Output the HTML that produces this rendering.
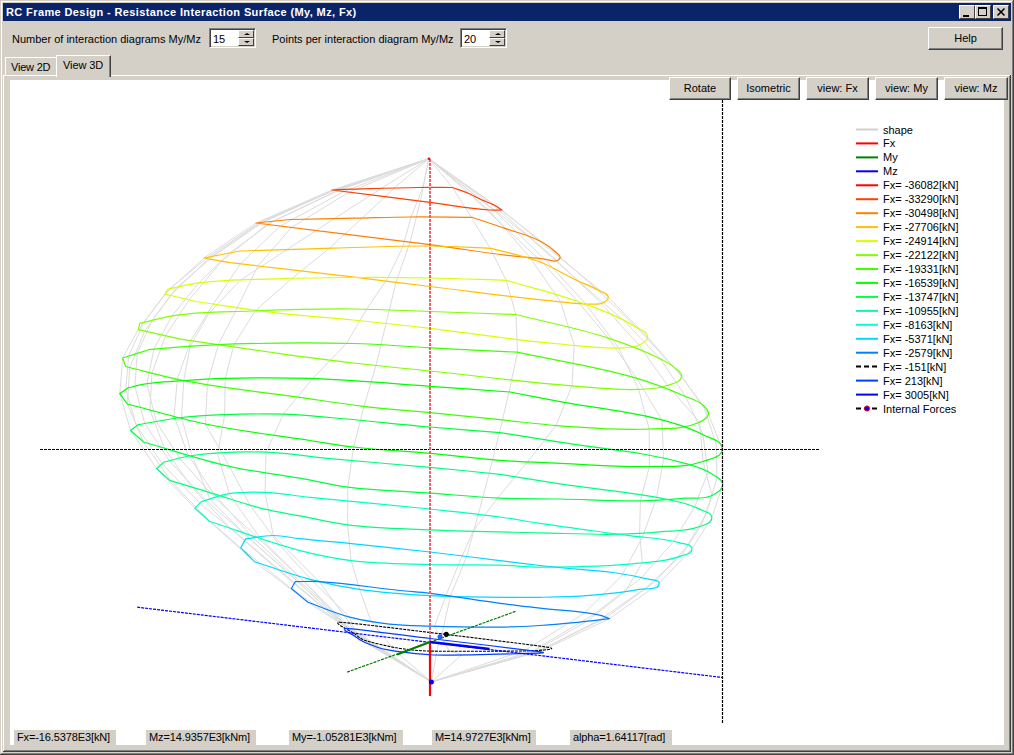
<!DOCTYPE html>
<html><head><meta charset="utf-8">
<style>
*{box-sizing:border-box}
html,body{margin:0;padding:0}
body{width:1014px;height:755px;overflow:hidden;position:relative;background:#d4d0c8;font-family:"Liberation Sans",sans-serif;font-size:11px;color:#000}
.a{position:absolute}
.t{position:absolute;white-space:nowrap;line-height:13px}
.btn{position:absolute;background:#d4d0c8;border-top:1px solid #fff;border-left:1px solid #fff;border-right:1px solid #404040;border-bottom:1px solid #404040;box-shadow:inset -1px -1px 0 #808080;text-align:center;white-space:nowrap}
.spin{position:absolute;background:#fff;border-top:1px solid #808080;border-left:1px solid #808080;border-right:1px solid #fff;border-bottom:1px solid #fff;box-shadow:inset 1px 1px 0 #404040, inset -1px -1px 0 #d4d0c8}
.sb{position:absolute;background:#d4d0c8;border-top:1px solid #fff;border-left:1px solid #fff;border-right:1px solid #404040;border-bottom:1px solid #404040}
.lbl{position:absolute;background:#d4d0c8;height:15px;white-space:nowrap;line-height:15px;padding-left:3px;letter-spacing:-0.12px}
svg text{font-family:"Liberation Sans",sans-serif;font-size:11px;fill:#000}
</style></head><body>
<!-- window frame -->
<div class="a" style="left:1px;top:1px;width:1012px;height:1px;background:#fff"></div>
<div class="a" style="left:1px;top:1px;width:1px;height:753px;background:#fff"></div>
<div class="a" style="left:1013px;top:0;width:1px;height:755px;background:#404040"></div>
<div class="a" style="left:1012px;top:1px;width:1px;height:753px;background:#808080"></div>
<div class="a" style="left:0;top:754px;width:1014px;height:1px;background:#404040"></div>
<div class="a" style="left:1px;top:753px;width:1012px;height:1px;background:#808080"></div>
<!-- title bar -->
<div class="a" style="left:3px;top:3px;width:1008px;height:18px;background:#0a246a"></div>
<div class="t" style="left:6px;top:6px;color:#fff;font-weight:bold;font-size:11px;letter-spacing:0.39px">RC Frame Design - Resistance Interaction Surface (My, Mz, Fx)</div>
<div class="sb" style="left:959px;top:5px;width:16px;height:14px"><div class="a" style="left:3px;top:9px;width:6px;height:2px;background:#000"></div></div>
<div class="sb" style="left:975px;top:5px;width:16px;height:14px"><div class="a" style="left:2px;top:1px;width:9px;height:9px;border:1px solid #000;border-top-width:2px"></div></div>
<div class="sb" style="left:993px;top:5px;width:16px;height:14px"><svg class="a" style="left:0;top:0" width="14" height="12"><path d="M3.5,2.5 L10.5,9.5 M10.5,2.5 L3.5,9.5" stroke="#000" stroke-width="1.6"/></svg></div>
<!-- toolbar -->
<div class="t" style="left:12px;top:33px">Number of interaction diagrams My/Mz</div>
<div class="spin" style="left:209px;top:28px;width:47px;height:20px"><div class="t" style="left:3px;top:4px">15</div></div>
<div class="sb" style="left:238px;top:30px;width:16px;height:8px"><div class="a" style="left:5px;top:2px;width:0;height:0;border-left:3px solid transparent;border-right:3px solid transparent;border-bottom:2px solid #000"></div></div>
<div class="sb" style="left:238px;top:38px;width:16px;height:8px"><div class="a" style="left:5px;top:2px;width:0;height:0;border-left:3px solid transparent;border-right:3px solid transparent;border-top:2px solid #000"></div></div>
<div class="t" style="left:272px;top:33px">Points per interaction diagram My/Mz</div>
<div class="spin" style="left:460px;top:28px;width:47px;height:20px"><div class="t" style="left:3px;top:4px">20</div></div>
<div class="sb" style="left:489px;top:30px;width:16px;height:8px"><div class="a" style="left:5px;top:2px;width:0;height:0;border-left:3px solid transparent;border-right:3px solid transparent;border-bottom:2px solid #000"></div></div>
<div class="sb" style="left:489px;top:38px;width:16px;height:8px"><div class="a" style="left:5px;top:2px;width:0;height:0;border-left:3px solid transparent;border-right:3px solid transparent;border-top:2px solid #000"></div></div>
<div class="btn" style="left:928px;top:27px;width:75px;height:23px;line-height:21px">Help</div>
<!-- tabs -->
<div class="a" style="left:5px;top:57px;width:51px;height:19px;border-top:1px solid #fff;border-left:1px solid #fff"></div>
<div class="t" style="left:11px;top:61px;letter-spacing:-0.2px">View 2D</div>
<div class="a" style="left:3px;top:75px;width:1008px;height:1px;background:#fff"></div>
<div class="a" style="left:56px;top:55px;width:55px;height:22px;background:#d4d0c8;border-top:1px solid #fff;border-left:1px solid #fff;border-right:1px solid #404040;box-shadow:inset -1px 0 0 #808080"></div>
<div class="t" style="left:63px;top:59px;letter-spacing:-0.1px">View 3D</div>
<!-- panel borders -->
<div class="a" style="left:3px;top:75px;width:1px;height:676px;background:#fff"></div>
<div class="a" style="left:1010px;top:75px;width:1px;height:677px;background:#404040"></div>
<div class="a" style="left:1009px;top:76px;width:1px;height:675px;background:#808080"></div>
<div class="a" style="left:3px;top:751px;width:1008px;height:1px;background:#404040"></div>
<div class="a" style="left:4px;top:750px;width:1006px;height:1px;background:#808080"></div>
<!-- chart area -->
<div class="a" style="left:10px;top:80px;width:994px;height:665px;background:#fff;overflow:hidden">
<svg class="a" style="left:-10px;top:-80px" width="1014" height="755" viewBox="0 0 1014 755">
<g fill="none" stroke-width="1.2" stroke-linejoin="round">
<path d="M428.9,158.7 L332.0,190.0 L256.0,223.0 L204.0,258.0 L165.0,294.0 L138.3,329.7 L122.7,358.0 L119.8,393.6 L130.6,430.5 L156.6,468.5 L195.0,508.2 L240.7,547.8 L291.4,588.5 L339.5,622.3 L346.6,628.4 L431.4,681.9" stroke="#dcdcdc" stroke-width="1"/>
<path d="M428.9,158.7 L502.0,210.0 L560.0,258.0 L608.3,297.0 L647.6,337.2 L681.6,376.5 L708.4,414.1 L722.3,449.0 L722.7,484.7 L711.8,517.9 L692.0,548.7 L659.2,583.4 L609.5,618.6 L548.7,647.4 L539.0,651.6 L431.4,681.9" stroke="#dcdcdc" stroke-width="1"/>
<path d="M428.9,158.7 L335.4,189.8 L262.6,222.3 L213.4,256.2 L177.1,287.2 L151.9,320.7 L137.3,353.4 L134.9,386.3 L144.8,423.6 L169.4,460.8 L205.9,500.4 L249.5,538.4 L297.8,581.6 L342.6,622.7 L348.5,628.6 L431.4,681.9" stroke="#dcdcdc" stroke-width="1"/>
<path d="M428.9,158.7 L333.7,189.9 L259.0,222.7 L208.0,257.2 L169.8,288.6 L143.7,322.5 L128.6,356.2 L125.8,389.3 L136.5,426.0 L162.2,463.8 L200.0,503.2 L244.9,540.4 L294.6,582.9 L341.1,622.5 L347.6,628.5 L431.4,681.9" stroke="#dcdcdc" stroke-width="1"/>
<path d="M428.9,158.7 L340.5,189.5 L273.2,221.2 L229.6,253.0 L198.8,283.0 L171.8,316.1 L153.9,349.0 L146.9,383.9 L156.3,421.7 L179.7,458.4 L214.9,497.8 L257.4,537.5 L304.1,581.6 L342.6,622.7 L348.5,628.6 L431.4,681.9" stroke="#dcdcdc" stroke-width="1"/>
<path d="M428.9,158.7 L381.3,188.4 L334.4,218.6 L286.9,249.6 L239.8,280.6 L208.9,313.4 L190.1,346.4 L183.7,380.6 L181.5,417.5 L192.1,455.6 L209.9,499.3 L249.1,538.5 L297.8,581.6 L342.6,622.7 L348.5,628.6 L431.4,681.9" stroke="#dcdcdc" stroke-width="1"/>
<path d="M428.9,158.7 L394.1,188.1 L362.4,218.0 L329.3,248.3 L291.9,278.5 L255.1,310.9 L234.0,344.6 L225.2,378.4 L224.7,414.7 L217.7,454.4 L229.3,493.7 L259.5,537.2 L304.1,581.6 L345.8,623.0 L350.4,628.9 L431.4,681.9" stroke="#dcdcdc" stroke-width="1"/>
<path d="M428.9,158.7 L422.9,187.5 L411.0,217.0 L402.9,246.6 L388.0,277.7 L366.5,309.4 L346.4,343.6 L312.6,378.6 L283.4,414.2 L266.0,452.2 L265.1,492.4 L273.3,535.5 L319.1,581.6 L350.0,623.5 L352.4,629.1 L431.4,681.9" stroke="#dcdcdc" stroke-width="1"/>
<path d="M428.9,158.7 L452.5,187.5 L471.3,217.3 L490.1,248.3 L506.2,280.3 L515.9,314.5 L517.5,352.3 L509.0,391.9 L499.5,432.6 L489.2,473.2 L478.3,514.5 L466.7,556.5 L450.4,596.2 L442.0,634.0 L439.0,639.6 L431.4,681.9" stroke="#dcdcdc" stroke-width="1"/>
<path d="M428.9,158.7 L469.7,193.9 L506.8,229.1 L543.6,263.8 L577.6,301.4 L608.3,338.1 L636.9,378.3 L662.0,420.3 L663.5,459.7 L656.3,498.5 L642.3,537.5 L621.5,575.9 L584.1,613.4 L533.0,645.4 L525.5,650.0 L431.4,681.9" stroke="#dcdcdc" stroke-width="1"/>
<path d="M428.9,158.7 L479.9,198.9 L529.1,237.1 L578.7,281.2 L625.9,322.5 L660.4,359.0 L685.6,396.5 L703.0,434.7 L707.9,472.4 L694.4,507.4 L673.4,541.9 L640.9,578.3 L593.6,614.5 L540.3,646.3 L533.2,650.9 L431.4,681.9" stroke="#dcdcdc" stroke-width="1"/>
<path d="M428.9,158.7 L495.2,205.6 L550.0,248.1 L597.8,290.0 L638.4,329.4 L675.1,368.4 L703.7,406.3 L716.3,444.5 L716.8,478.8 L706.2,514.0 L687.0,546.4 L655.0,581.7 L606.3,617.5 L546.6,647.1 L537.1,651.4 L431.4,681.9" stroke="#dcdcdc" stroke-width="1"/>
<path d="M428.9,158.7 L343.9,191.5 L280.3,226.0 L240.4,263.9 L213.3,304.0 L190.8,340.7 L177.4,379.0 L174.0,415.9 L187.8,454.5 L214.0,493.8 L249.7,534.3 L290.9,573.2 L332.8,611.2 L352.1,631.8 L352.4,634.2 L431.4,681.9" stroke="#dcdcdc" stroke-width="1"/>
<path d="M428.9,158.7 L498.6,210.0 L554.1,258.1 L600.8,303.1 L638.9,345.0 L667.5,385.4 L699.6,422.0 L703.0,461.5 L712.0,495.5 L701.3,525.2 L682.1,554.7 L646.6,587.2 L600.0,619.7 L544.5,648.2 L537.1,652.0 L431.4,681.9" stroke="#dcdcdc" stroke-width="1"/>
<path d="M428.9,158.7 L493.5,210.0 L543.8,258.2 L585.4,303.6 L618.6,348.0 L638.7,389.4 L649.2,429.0 L649.4,466.5 L640.4,500.8 L639.6,533.0 L642.3,562.7 L625.7,591.0 L587.2,621.2 L537.2,649.5 L531.3,653.1 L431.4,681.9" stroke="#dcdcdc" stroke-width="1"/>
<path d="M428.9,158.7 L488.4,209.8 L529.6,257.0 L560.6,301.8 L574.2,345.0 L571.9,385.8 L556.1,425.4 L527.7,461.7 L497.7,497.9 L473.1,531.0 L458.4,564.7 L445.8,596.1 L434.5,626.2 L449.3,651.0 L462.0,654.5 L431.4,681.9" stroke="#dcdcdc" stroke-width="1"/>
<path d="M428.9,158.7 L420.4,201.2 L410.1,242.1 L396.0,282.3 L386.0,323.6 L376.0,365.4 L364.0,406.3 L353.6,447.0 L347.9,487.2 L347.6,524.8 L351.1,560.5 L359.6,589.4 L370.9,620.9 L391.8,646.8 L394.7,650.6 L431.4,681.9" stroke="#dcdcdc" stroke-width="1"/>
<path d="M428.9,158.7 L349.0,192.2 L291.5,227.4 L257.9,266.0 L237.4,307.4 L218.3,344.7 L207.4,384.0 L205.4,424.0 L229.5,466.3 L249.5,504.5 L278.3,543.6 L311.0,579.5 L349.6,617.2 L356.2,634.8 L354.3,635.9 L431.4,681.9" stroke="#dcdcdc" stroke-width="1"/>
<path d="M428.9,158.7 L337.1,190.6 L267.1,224.4 L221.5,261.2 L189.1,299.9 L165.5,335.8 L152.0,372.9 L149.9,409.8 L164.2,447.8 L191.8,487.1 L229.8,527.8 L276.3,568.6 L323.2,607.8 L347.9,628.7 L350.4,632.2 L431.4,681.9" stroke="#dcdcdc" stroke-width="1"/>
<path d="M428.9,158.7 L333.7,190.2 L259.2,223.4 L208.4,258.8 L170.5,295.3 L144.7,331.1 L129.8,367.5 L127.4,404.0 L143.6,442.0 L170.8,480.7 L209.4,521.2 L254.5,561.6 L307.9,602.3 L343.7,625.5 L348.5,630.3 L431.4,681.9" stroke="#dcdcdc" stroke-width="1"/>
<path d="M332.00,190.00 C336.68,189.75 340.32,189.55 345.00,189.30 C371.10,188.65 391.39,187.82 417.50,187.50 C430.10,187.34 439.90,187.50 452.50,187.50 C458.80,189.84 463.84,191.32 470.00,194.00 C473.69,195.60 476.35,197.30 480.00,199.00 C485.33,201.49 489.81,202.73 495.00,205.50 C497.64,206.91 499.48,208.38 502.00,210.00 C497.68,210.00 494.31,210.27 490.00,210.00 C468.27,208.63 451.60,205.14 430.00,202.40 C394.72,197.94 367.28,194.46 332.00,190.00Z" stroke="#ff4000"/>
<path d="M256.00,223.00 C268.24,221.74 277.76,220.76 290.00,219.50 C313.11,219.03 331.09,218.68 354.20,218.20 C374.29,217.78 389.91,217.17 410.00,217.00 C432.32,216.81 449.68,217.19 472.00,217.30 C483.88,221.30 493.17,224.27 505.00,228.40 C517.58,232.79 527.97,234.87 539.80,241.00 C545.95,244.19 550.64,247.16 555.60,252.00 C557.52,253.87 561.19,255.60 560.00,258.00 C556.76,264.51 547.06,258.70 539.80,258.30 C500.02,256.12 469.53,249.53 430.00,244.60 C367.36,236.82 318.64,230.78 256.00,223.00Z" stroke="#ff8000"/>
<path d="M204.00,258.00 C216.96,255.48 227.04,253.52 240.00,251.00 C273.66,249.99 299.84,249.09 333.50,248.20 C368.24,247.28 395.25,245.75 430.00,246.00 C452.12,246.16 469.30,247.47 491.40,248.30 C508.90,253.23 523.05,255.44 540.00,262.00 C553.51,267.23 562.93,273.74 576.00,280.00 C584.32,283.99 591.29,286.11 599.30,290.70 C602.73,292.67 607.87,293.07 608.30,297.00 C608.61,299.86 605.47,301.59 602.90,302.90 C599.45,304.66 596.08,304.02 592.20,304.10 C580.58,304.33 571.57,302.89 560.00,301.80 C513.09,297.37 476.79,292.12 430.00,286.50 C402.70,283.22 381.50,280.47 354.20,277.20 C309.50,271.85 274.71,267.92 230.00,262.70 C220.64,261.01 213.36,259.69 204.00,258.00Z" stroke="#ffc000"/>
<path d="M165.00,294.00 C166.08,292.20 166.92,290.80 168.00,289.00 C179.77,286.70 188.79,284.06 200.70,282.60 C227.64,279.30 248.87,279.71 276.00,278.80 C303.71,277.87 325.28,277.64 353.00,277.50 C380.72,277.36 402.28,277.49 430.00,278.00 C457.48,278.50 478.83,279.47 506.30,280.30 C532.04,287.93 552.58,292.29 577.80,301.50 C598.91,309.21 615.94,314.60 635.00,326.50 C640.05,329.65 647.52,331.25 647.60,337.20 C647.66,341.51 642.60,343.38 638.70,345.20 C632.21,348.23 626.16,347.74 619.00,348.00 C597.73,348.78 581.21,345.83 560.00,344.00 C543.84,342.61 531.31,341.18 515.20,339.30 C484.49,335.72 460.71,332.04 430.00,328.40 C402.31,325.12 380.74,322.81 353.00,320.00 C325.30,317.19 303.65,316.04 276.00,312.80 C247.01,309.41 224.61,305.57 195.70,301.50 C184.65,298.80 176.05,296.70 165.00,294.00Z" stroke="#d8ff00"/>
<path d="M138.30,329.70 C138.84,327.43 139.26,325.67 139.80,323.40 C152.65,320.48 162.45,317.14 175.50,315.30 C202.46,311.50 223.80,312.04 251.00,311.00 C287.70,309.60 316.27,308.76 353.00,309.00 C380.73,309.18 402.28,310.57 430.00,311.50 C461.03,312.54 485.17,313.42 516.20,314.50 C549.36,323.00 575.76,327.50 608.30,338.10 C627.35,344.31 642.10,349.69 660.00,358.70 C665.44,361.44 669.83,363.57 674.40,367.60 C677.49,370.32 682.27,372.43 681.60,376.50 C680.60,382.50 673.02,383.42 667.30,385.50 C657.53,389.05 649.08,388.97 638.70,389.40 C614.49,390.39 595.65,387.71 571.50,385.80 C520.44,381.76 480.94,376.31 430.00,371.00 C402.28,368.11 380.68,366.23 353.00,363.00 C325.24,359.76 303.69,356.80 276.00,353.00 C241.62,348.28 214.94,344.17 180.60,339.20 C165.37,335.78 153.53,333.12 138.30,329.70Z" stroke="#80ff00"/>
<path d="M122.70,358.00 C132.67,354.87 140.43,352.43 150.40,349.30 C172.94,347.68 190.42,345.72 213.00,344.80 C263.36,342.76 302.61,342.33 353.00,343.50 C380.76,344.15 402.28,346.33 430.00,347.80 C461.39,349.47 485.81,350.62 517.20,352.20 C560.29,361.60 594.58,365.88 636.90,378.30 C654.63,383.50 668.04,388.87 685.00,396.20 C691.64,399.07 697.69,400.20 703.00,405.10 C705.78,407.66 708.96,410.36 708.40,414.10 C707.75,418.41 703.35,420.37 699.40,422.20 C682.92,429.84 667.54,428.10 649.40,429.00 C617.24,430.60 592.13,428.01 560.00,425.80 C538.34,424.31 521.60,421.88 500.00,419.70 C474.80,417.16 455.20,415.17 430.00,412.70 C406.10,410.35 387.45,409.12 363.60,406.30 C340.64,403.59 322.89,400.66 300.00,397.40 C258.15,391.45 225.30,388.61 183.80,380.60 C162.63,376.52 146.55,371.58 125.60,366.50 C124.56,363.44 123.74,361.06 122.70,358.00Z" stroke="#40ff00"/>
<path d="M119.80,393.60 C122.54,391.66 124.66,390.14 127.40,388.20 C132.84,386.80 136.97,385.26 142.50,384.30 C157.21,381.76 168.91,381.66 183.80,380.60 C198.62,379.54 210.15,378.80 225.00,378.40 C255.45,377.59 279.16,377.40 309.60,378.40 C353.01,379.82 386.66,383.33 430.00,386.30 C458.81,388.27 481.20,389.95 510.00,392.00 C528.00,395.46 541.99,398.22 560.00,401.60 C598.60,408.85 629.45,410.81 667.30,421.30 C680.53,424.97 690.94,428.14 703.00,434.70 C710.60,438.83 722.57,440.36 722.30,449.00 C722.04,457.27 710.82,458.79 703.00,461.50 C684.69,467.85 668.77,465.95 649.40,466.50 C617.21,467.42 592.18,464.65 560.00,463.30 C538.39,462.39 521.57,462.00 500.00,460.40 C474.74,458.53 455.22,455.72 430.00,453.40 C402.52,450.87 381.02,450.19 353.60,447.00 C337.84,445.17 325.69,442.91 310.00,440.50 C272.35,434.72 242.80,431.70 205.50,424.00 C177.08,418.13 155.52,411.20 127.40,404.00 C124.66,400.26 122.54,397.34 119.80,393.60Z" stroke="#00ff00"/>
<path d="M130.60,430.50 C133.34,428.41 135.46,426.79 138.20,424.70 C153.82,422.11 165.87,419.31 181.60,417.50 C197.15,415.71 209.35,415.27 225.00,414.70 C246.08,413.93 262.51,413.54 283.60,414.20 C300.34,414.72 313.31,416.11 330.00,417.50 C366.04,420.49 393.98,423.85 430.00,427.00 C455.18,429.20 474.80,430.58 500.00,432.60 C521.60,436.06 538.42,438.65 560.00,442.20 C605.03,449.60 641.04,451.03 685.00,463.30 C695.07,466.11 703.26,468.26 712.00,474.00 C716.55,476.99 722.69,479.25 722.70,484.70 C722.71,490.17 716.94,493.14 712.00,495.50 C703.18,499.70 694.74,497.43 685.00,498.20 C668.97,499.47 656.48,500.51 640.40,500.80 C611.45,501.32 588.95,499.54 560.00,499.00 C538.40,498.60 521.58,499.03 500.00,498.10 C474.76,497.01 455.20,494.90 430.00,493.10 C400.37,490.98 377.16,491.02 347.70,487.20 C330.37,484.95 317.20,481.27 300.00,478.20 C274.59,473.67 254.48,471.97 229.30,466.30 C198.02,459.25 174.45,450.75 143.60,442.00 C138.92,437.86 135.28,434.64 130.60,430.50Z" stroke="#00ff40"/>
<path d="M156.60,468.50 C159.34,466.16 161.46,464.34 164.20,462.00 C174.35,459.66 182.08,456.91 192.40,455.50 C218.75,451.90 239.62,451.44 266.20,452.20 C289.28,452.86 307.01,456.54 330.00,458.70 C365.97,462.08 394.02,463.95 430.00,467.30 C455.22,469.65 474.80,471.78 500.00,474.30 C521.60,477.76 538.39,480.53 560.00,483.90 C602.81,490.58 636.93,491.60 679.00,502.00 C686.36,503.82 692.14,505.46 698.90,508.90 C703.94,511.47 711.81,512.24 711.80,517.90 C711.79,523.54 704.17,524.79 698.90,526.80 C685.44,531.94 673.54,530.47 659.20,531.80 C644.91,533.13 633.75,533.89 619.40,534.20 C590.82,534.81 568.58,533.44 540.00,532.80 C500.40,531.91 469.58,531.54 430.00,529.80 C400.35,528.50 377.16,528.43 347.70,524.80 C330.36,522.66 317.17,519.14 300.00,515.90 C287.36,513.51 277.39,512.27 264.90,509.20 C244.59,504.21 229.32,498.45 209.30,492.40 C195.01,488.08 183.89,484.72 169.60,480.40 C164.92,476.12 161.28,472.78 156.60,468.50Z" stroke="#00ff80"/>
<path d="M195.00,508.20 C197.30,505.86 199.10,504.04 201.40,501.70 C211.41,498.82 218.92,495.34 229.20,493.70 C241.90,491.67 252.05,491.94 264.90,492.40 C281.22,492.99 293.75,495.63 310.00,497.30 C353.18,501.75 386.84,504.43 430.00,509.00 C455.22,511.67 474.87,513.56 500.00,517.00 C514.45,518.98 525.58,521.25 540.00,523.40 C572.13,528.18 597.22,531.22 629.40,535.70 C647.26,538.19 661.70,537.61 679.00,542.70 C683.94,544.16 691.71,543.55 692.00,548.70 C692.31,554.17 684.13,554.69 679.00,556.60 C665.42,561.64 653.71,561.72 639.30,563.20 C603.71,566.84 575.78,567.29 540.00,567.10 C525.58,567.02 514.41,565.52 500.00,565.10 C474.81,564.36 455.19,565.23 430.00,564.50 C401.75,563.68 379.65,564.00 351.60,560.60 C332.82,558.32 318.32,555.33 300.00,550.60 C266.76,542.03 241.95,531.78 209.30,521.20 C204.15,516.52 200.15,512.88 195.00,508.20Z" stroke="#00ffc0"/>
<path d="M240.70,547.80 C242.50,544.60 243.90,542.10 245.70,538.90 C255.71,537.68 263.42,535.51 273.50,535.50 C283.11,535.49 290.45,537.67 300.00,538.70 C317.62,540.61 331.37,541.62 349.00,543.40 C378.18,546.35 400.87,548.66 430.00,552.00 C455.22,554.89 474.80,557.51 500.00,560.60 C514.40,562.37 525.60,563.70 540.00,565.50 C579.32,570.41 610.84,569.46 649.20,579.40 C652.95,580.37 659.37,579.53 659.20,583.40 C658.87,590.88 646.62,587.87 639.30,589.40 C621.70,593.07 607.63,593.88 589.70,595.30 C571.85,596.72 557.90,596.94 540.00,597.30 C525.60,597.59 514.40,597.46 500.00,597.30 C474.80,597.01 455.17,597.11 430.00,595.70 C404.59,594.27 384.78,593.06 359.60,589.40 C342.01,586.84 328.41,584.05 311.20,579.60 C290.51,574.25 274.98,568.14 254.60,561.70 C249.60,556.70 245.70,552.80 240.70,547.80Z" stroke="#00d8ff"/>
<path d="M291.40,588.50 C292.80,586.02 293.90,584.08 295.30,581.60 C303.90,581.60 310.61,581.13 319.20,581.60 C348.42,583.20 370.89,587.54 400.00,590.50 C410.79,591.60 419.23,592.03 430.00,593.30 C455.28,596.28 474.77,599.95 500.00,603.30 C514.38,605.21 525.60,606.47 540.00,608.20 C561.45,610.77 578.54,610.40 599.60,615.20 C603.27,616.04 605.94,617.38 609.50,618.60 C598.77,619.86 590.45,621.01 579.70,622.10 C565.43,623.55 554.32,624.60 540.00,625.50 C525.62,626.40 514.41,626.91 500.00,627.10 C474.80,627.42 455.19,626.90 430.00,626.10 C415.37,625.64 403.94,625.72 389.40,624.10 C374.98,622.50 363.73,620.89 349.70,617.20 C334.25,613.14 322.95,607.66 307.90,602.30 C301.96,597.33 297.34,593.47 291.40,588.50Z" stroke="#0080ff"/>
<path d="M339.5,622.3 C347.1,622.2 409.1,630.0 430.0,632.5 C450.9,635.0 538.7,645.6 548.7,647.4 C558.7,649.2 541.9,650.4 530.0,650.8 C518.1,651.2 443.4,651.4 430.0,651.1 C416.6,650.8 402.8,648.9 396.2,647.8 C389.6,646.7 368.6,641.8 364.4,640.3 C360.1,638.8 356.2,634.9 353.7,633.1 C351.2,631.3 331.9,622.4 339.5,622.3Z" stroke="#000" stroke-width="1.1" stroke-dasharray="3 1"/>
<path d="M346.6,628.4 C354.2,628.7 410.8,636.2 430.0,638.5 C449.2,640.8 529.0,650.1 539.0,651.6 C549.0,653.1 540.5,653.1 530.0,653.4 C519.5,653.7 448.0,655.4 433.7,655.0 C419.4,654.6 393.7,651.0 386.8,649.7 C379.9,648.4 367.7,643.6 364.4,642.2 C361.1,640.8 355.5,636.9 353.7,635.5 C351.9,634.1 339.0,628.1 346.6,628.4Z" stroke="#0040ff"/>
</g>
<!-- axes -->
<path d="M40,449.5H819" stroke="#000" stroke-width="1.2" stroke-dasharray="3 1" fill="none"/>
<path d="M722.5,100V723" stroke="#000" stroke-width="1.2" stroke-dasharray="3 1" fill="none"/>
<path d="M137.2,607.2L722.5,677.5" stroke="#0000ff" stroke-width="1.2" stroke-dasharray="3 1" fill="none"/>
<path d="M347.1,672.1L516.1,611.2" stroke="#008000" stroke-width="1.2" stroke-dasharray="3 1" fill="none"/>
<path d="M430,159V642" stroke="#ff5a66" stroke-width="2" stroke-dasharray="3 1" fill="none"/>
<path d="M430,642V696" stroke="#ff0000" stroke-width="2.2" fill="none"/>
<path d="M430,642L489.5,649" stroke="#0000ff" stroke-width="2.3" fill="none"/>
<path d="M430,642L397,654.5" stroke="#008000" stroke-width="2" fill="none"/>
<circle cx="429" cy="158.8" r="1.3" fill="#ff0000"/>
<circle cx="431.4" cy="681.9" r="2.5" fill="#0000ff"/>
<circle cx="440" cy="636.7" r="2.5" fill="#2060ff"/>
<circle cx="446.3" cy="634.3" r="2.5" fill="#000"/>
<path d="M856,129.5H878" stroke="#d0d0d0" stroke-width="2"/>
<text x="883" y="133.5">shape</text>
<path d="M856,143.4H878" stroke="#ff0000" stroke-width="2"/>
<text x="883" y="147.4">Fx</text>
<path d="M856,157.4H878" stroke="#008000" stroke-width="2"/>
<text x="883" y="161.4">My</text>
<path d="M856,171.3H878" stroke="#0000ff" stroke-width="2"/>
<text x="883" y="175.3">Mz</text>
<path d="M856,185.3H878" stroke="#ff0000" stroke-width="2"/>
<text x="883" y="189.3">Fx= -36082[kN]</text>
<path d="M856,199.2H878" stroke="#ff4000" stroke-width="2"/>
<text x="883" y="203.2">Fx= -33290[kN]</text>
<path d="M856,213.2H878" stroke="#ff8000" stroke-width="2"/>
<text x="883" y="217.2">Fx= -30498[kN]</text>
<path d="M856,227.1H878" stroke="#ffc000" stroke-width="2"/>
<text x="883" y="231.1">Fx= -27706[kN]</text>
<path d="M856,241.1H878" stroke="#d8ff00" stroke-width="2"/>
<text x="883" y="245.1">Fx= -24914[kN]</text>
<path d="M856,255.1H878" stroke="#80ff00" stroke-width="2"/>
<text x="883" y="259.1">Fx= -22122[kN]</text>
<path d="M856,269.0H878" stroke="#40ff00" stroke-width="2"/>
<text x="883" y="273.0">Fx= -19331[kN]</text>
<path d="M856,282.9H878" stroke="#00ff00" stroke-width="2"/>
<text x="883" y="286.9">Fx= -16539[kN]</text>
<path d="M856,296.9H878" stroke="#00ff40" stroke-width="2"/>
<text x="883" y="300.9">Fx= -13747[kN]</text>
<path d="M856,310.9H878" stroke="#10f8a0" stroke-width="2"/>
<text x="883" y="314.9">Fx= -10955[kN]</text>
<path d="M856,324.8H878" stroke="#00ffd8" stroke-width="2"/>
<text x="883" y="328.8">Fx= -8163[kN]</text>
<path d="M856,338.8H878" stroke="#00d8ff" stroke-width="2"/>
<text x="883" y="342.8">Fx= -5371[kN]</text>
<path d="M856,352.7H878" stroke="#0080ff" stroke-width="2"/>
<text x="883" y="356.7">Fx= -2579[kN]</text>
<path d="M856,366.6H878" stroke="#000" stroke-width="2" stroke-dasharray="5 3"/>
<text x="883" y="370.6">Fx= -151[kN]</text>
<path d="M856,380.6H878" stroke="#0040ff" stroke-width="2"/>
<text x="883" y="384.6">Fx= 213[kN]</text>
<path d="M856,394.6H878" stroke="#0000ff" stroke-width="2"/>
<text x="883" y="398.6">Fx= 3005[kN]</text>
<path d="M856,408.5H878" stroke="#000" stroke-width="2" stroke-dasharray="5 3"/><circle cx="867" cy="408.5" r="2.6" fill="#0000ff" stroke="#ff0000" stroke-width="1"/>
<text x="883" y="412.5">Internal Forces</text>
</svg>
</div>
<!-- chart buttons -->
<div class="btn" style="left:669px;top:77px;width:62px;height:23px;line-height:21px">Rotate</div>
<div class="btn" style="left:737px;top:77px;width:63px;height:23px;line-height:21px">Isometric</div>
<div class="btn" style="left:806px;top:77px;width:63px;height:23px;line-height:21px">view: Fx</div>
<div class="btn" style="left:875px;top:77px;width:63px;height:23px;line-height:21px">view: My</div>
<div class="btn" style="left:944px;top:77px;width:64px;height:23px;line-height:21px">view: Mz</div>
<!-- status labels -->
<div class="lbl" style="left:14px;top:730px;width:102px">Fx=-16.5378E3[kN]</div>
<div class="lbl" style="left:146px;top:730px;width:110px">Mz=14.9357E3[kNm]</div>
<div class="lbl" style="left:289px;top:730px;width:114px">My=-1.05281E3[kNm]</div>
<div class="lbl" style="left:432px;top:730px;width:104px">M=14.9727E3[kNm]</div>
<div class="lbl" style="left:570px;top:730px;width:102px">alpha=1.64117[rad]</div>
</body></html>
